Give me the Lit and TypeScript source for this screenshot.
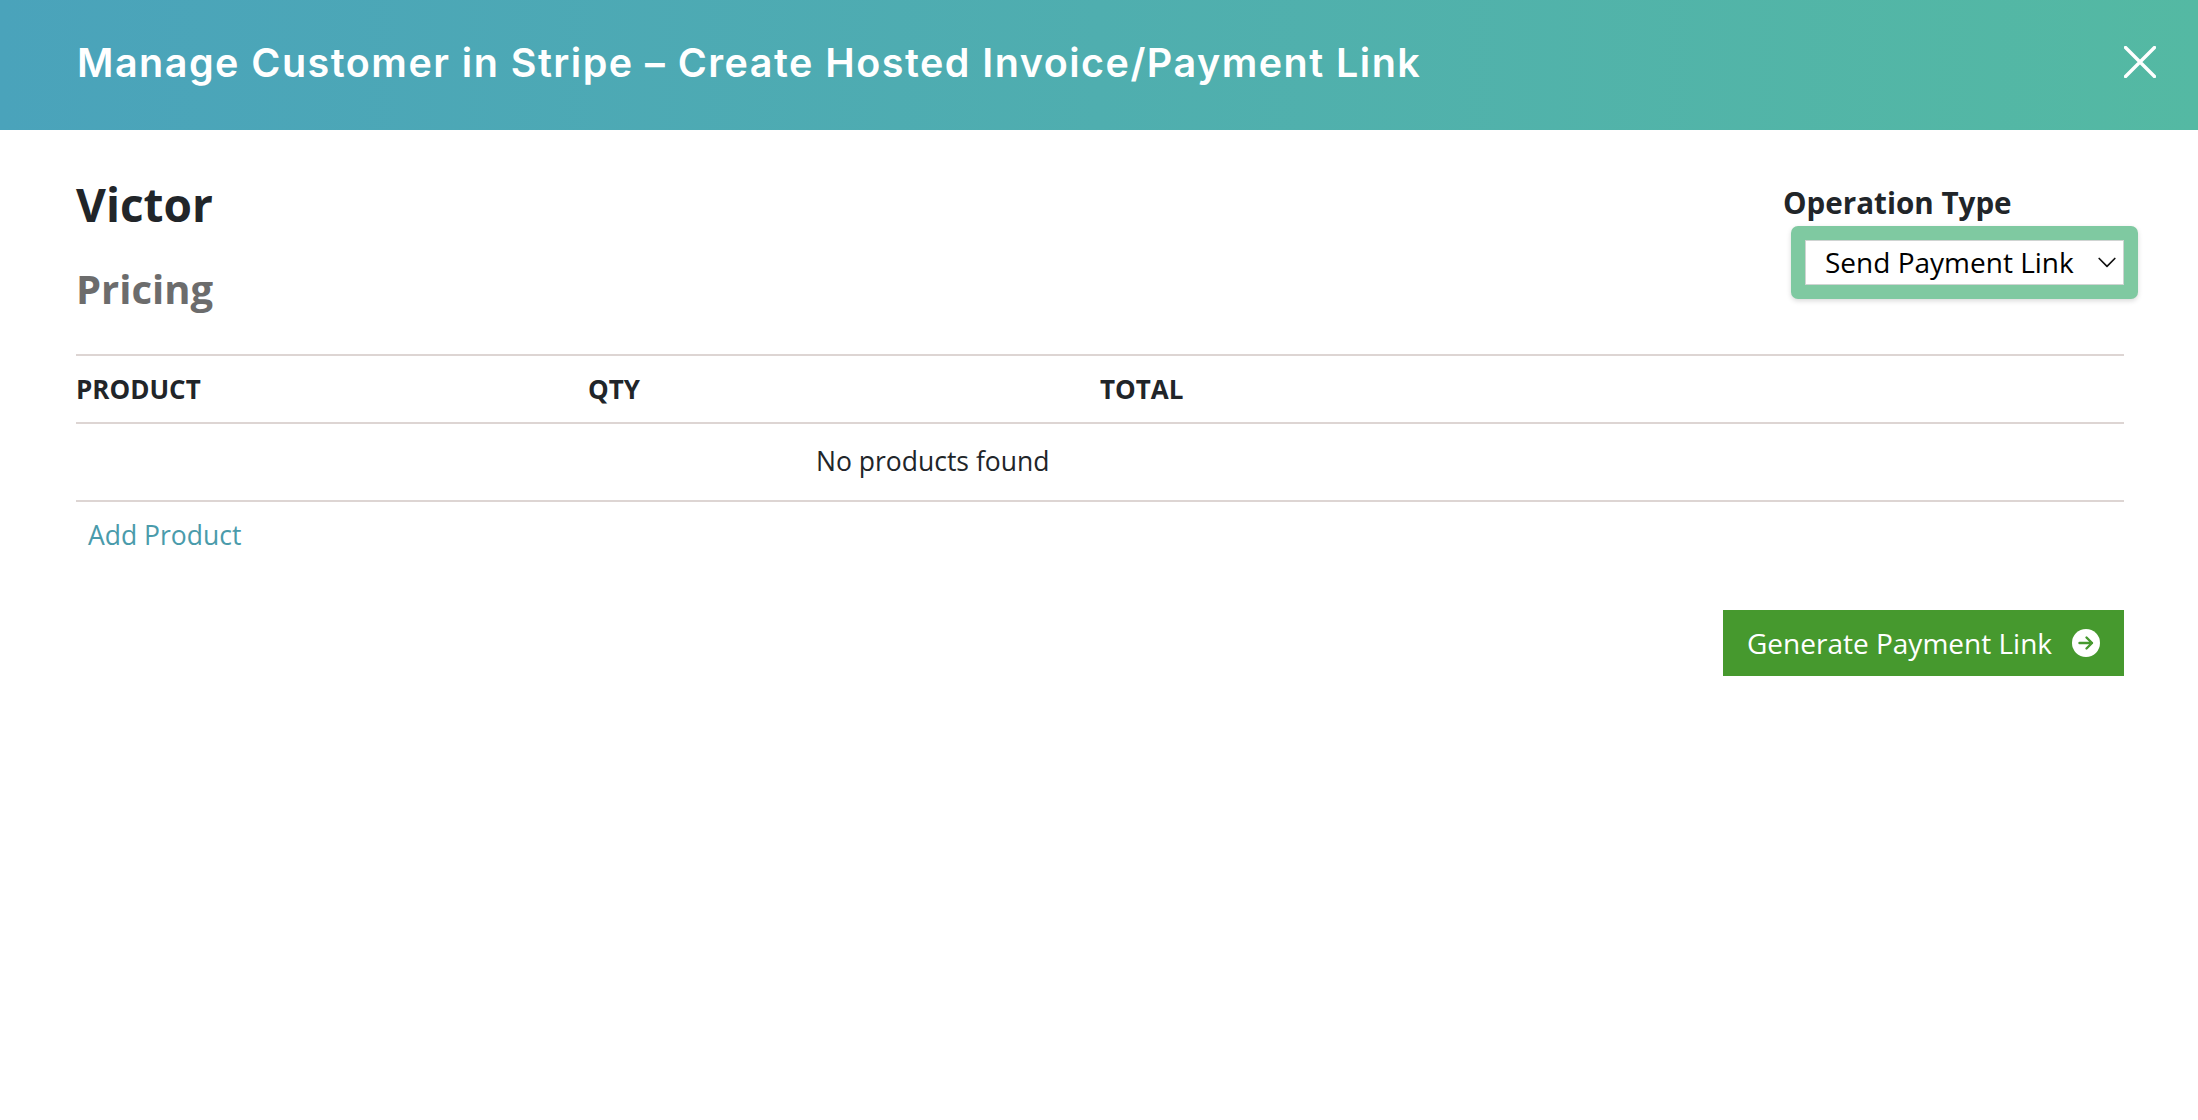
import { LitElement, html, css } from "lit";
import { customElement } from "lit/decorators.js";

@customElement("app-root")
export class AppRoot extends LitElement {
  static styles = css`
    :host { display: block; height: 1120px; background: #fff; font-family: "Open Sans", sans-serif; color: #212529; overflow: hidden; }
    * { box-sizing: border-box; }
    .head { height: 130px; background: linear-gradient(90deg, #4aa3bb 0%, #54b9a3 100%); display: flex; align-items: center; justify-content: space-between; padding: 0 42px 0 77px; }
    .title { margin: 0; color: #fff; font-family: Inter, sans-serif; font-weight: 600; font-size: 39.5px; letter-spacing: 1.48px; line-height: 1; padding-bottom: 2px; white-space: nowrap; }
    .close { display: block; width: 32px; height: 32px; margin-bottom: 6px; }
    .body { padding: 0 74px 0 76px; }
    .top { display: flex; justify-content: space-between; height: 224px; }
    .names h1 { margin: 0; padding-top: 43px; font-size: 46px; line-height: 62px; font-weight: 700; }
    .names h2 { margin: 0; padding-top: 28px; font-size: 40px; line-height: 52px; font-weight: 700; color: #6c6c6c; }
    .op { display: flex; flex-direction: column; align-items: flex-start; margin-right: -14px; padding-top: 53px; }
    .op label { font-size: 29.6px; font-weight: 700; line-height: 42px; margin-left: -8px; margin-top: -1px; margin-bottom: 1px; }
    .ring { margin-top: 1px; width: 347px; height: 73px; padding: 14px; background: #7fc9a1; border-radius: 7px; box-shadow: 0 2px 5px rgba(0,0,0,.15); position: relative; }
    select { appearance: none; display: block; width: 100%; height: 45px; border: 1px solid #cfd4d2; border-radius: 0; background: #fff; font: 400 28px "Open Sans", sans-serif; color: #000; padding: 0 0 1px 19px; outline: none; }
    .chev { position: absolute; right: 22px; top: 31px; width: 18px; height: 11px; pointer-events: none; }
    .row { display: grid; grid-template-columns: repeat(4, 512px); border-bottom: 2px solid #ddd5d3; }
    .hdr { border-top: 2px solid #ddd5d3; height: 70px; align-items: center; font-size: 26px; font-weight: 700; }
    .hdr span { padding-bottom: 1px; }
    .empty { display: block; height: 78px; padding: 19px 0 0 740px; font-size: 26.5px; line-height: 36px; }
    .add { display: block; margin: 15px 0 0 12px; font-size: 26.5px; line-height: 37px; color: #4a9bab; text-decoration: none; }
    .foot { display: flex; justify-content: flex-end; margin-top: 56px; }
    .btn { display: flex; align-items: center; height: 66px; width: 401px; padding: 0 24px 0 24px; justify-content: space-between; border: 0; background: #46992e; color: #fff; font: 400 28px "Open Sans", sans-serif; }
    .btn svg { display: block; width: 28px; height: 28px; }
  `;

  render() {
    return html`
      <header class="head">
        <h3 class="title">Manage Customer in Stripe – Create Hosted Invoice/Payment Link</h3>
        <svg class="close" viewBox="0 0 32 32" fill="none" stroke="#fff" stroke-width="3.4" stroke-linecap="round"><path d="M1.5 1.5 30.5 30.5M30.5 1.5 1.5 30.5"/></svg>
      </header>
      <main class="body">
        <section class="top">
          <div class="names">
            <h1>Victor</h1>
            <h2>Pricing</h2>
          </div>
          <div class="op">
            <label>Operation Type</label>
            <div class="ring">
              <select><option>Send Payment Link</option></select>
              <svg class="chev" viewBox="0 0 18 11" fill="none" stroke="#111" stroke-width="1.7" stroke-linecap="round" stroke-linejoin="round"><path d="M1.2 1.5 9 9.3 16.8 1.5"/></svg>
            </div>
          </div>
        </section>
        <div class="row hdr"><span>PRODUCT</span><span>QTY</span><span>TOTAL</span><span></span></div>
        <div class="row empty">No products found</div>
        <a class="add" href="#">Add Product</a>
        <div class="foot">
          <button class="btn">Generate Payment Link
            <svg viewBox="0 0 28 28"><circle cx="14" cy="14" r="14" fill="#fff"/><path d="M7.5 14H20M14.5 8.5 20 14 14.5 19.5" fill="none" stroke="#46992e" stroke-width="2.4" stroke-linecap="round" stroke-linejoin="round"/></svg>
          </button>
        </div>
      </main>
    `;
  }
}
